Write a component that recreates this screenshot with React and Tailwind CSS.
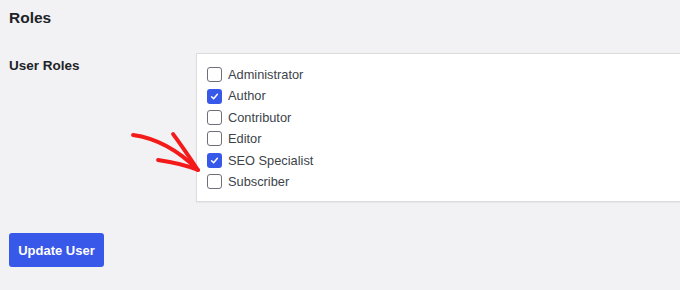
import React from "react";

const roles = [
  { name: "Administrator", checked: false },
  { name: "Author", checked: true },
  { name: "Contributor", checked: false },
  { name: "Editor", checked: false },
  { name: "SEO Specialist", checked: true },
  { name: "Subscriber", checked: false },
];

function Box({ checked }) {
  if (checked) {
    return (
      <span className="w-[15px] h-[15px] rounded-[3px] bg-[#3858e9] flex items-center justify-center shrink-0">
        <svg width="11" height="11" viewBox="0 0 12 12" fill="none">
          <path d="M2.8 6.3 L5 8.4 L9.2 3.6" stroke="white" strokeWidth="1.6" strokeLinecap="round" strokeLinejoin="round" />
        </svg>
      </span>
    );
  }
  return <span className="w-[15px] h-[15px] rounded-[3px] border border-[#6d7076] bg-white shrink-0" />;
}

export default function App() {
  return (
    <div className="w-[680px] h-[290px] bg-[#f2f2f4] overflow-hidden relative font-['Liberation_Sans',Arial,sans-serif] text-[#1d2327]">
      <h2 className="pl-[9px] pt-[9px] text-[15.5px] font-bold leading-[18px]">Roles</h2>

      <div className="flex mt-[26px]">
        <div className="w-[196px] pl-[9px] pt-[3px] text-[13.5px] font-bold">User Roles</div>
        <div className="flex-1 bg-white border border-[#dcdcde] border-r-0 shadow-[0_1px_1px_rgba(0,0,0,0.04)] pl-[10px] pt-[10px] pb-[9px] flex flex-col">
          {roles.map((r) => (
            <label key={r.name} className="flex items-center gap-[6px] h-[21.4px] text-[12.8px] text-[#3c434a]">
              <Box checked={r.checked} />
              <span>{r.name}</span>
            </label>
          ))}
        </div>
      </div>

      <div className="pl-[9px] mt-[31px]">
        <button className="w-[95px] h-[34px] rounded-[3px] bg-[#3858e9] text-white text-[13px] font-bold">
          Update User
        </button>
      </div>

      <svg className="absolute left-0 top-0 pointer-events-none" width="680" height="290">
        <g stroke="#f41a1a" strokeWidth="3.8" fill="none" strokeLinecap="round" strokeLinejoin="round">
          <path d="M133 135 C 155 138, 178 150, 198 170" />
          <path d="M173 134 C 182 146, 190 158, 198 170" />
          <path d="M158 160 C 172 162, 186 165, 198 170" />
        </g>
      </svg>
    </div>
  );
}
